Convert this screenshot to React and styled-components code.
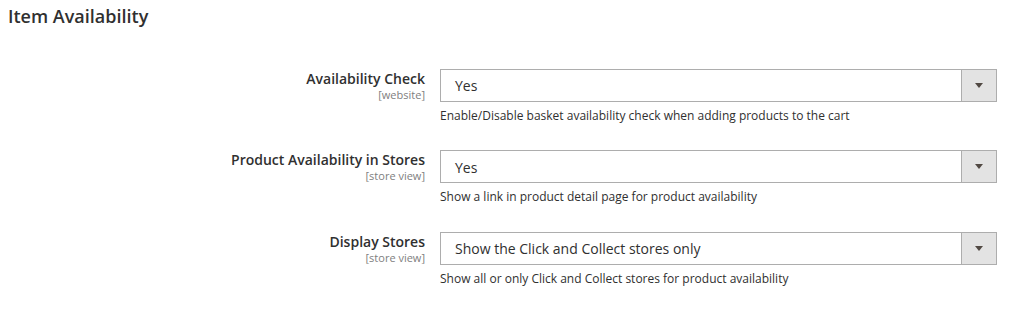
import React from "react";
import styled, { createGlobalStyle } from "styled-components";

const GlobalStyle = createGlobalStyle`
  body {
    margin: 0;
    background: #ffffff;
    font-family: "Open Sans", "Liberation Sans", sans-serif;
    color: #303030;
  }
`;

const fields = [
  {
    id: "availability-check",
    label: "Availability Check",
    scope: "[website]",
    value: "Yes",
    note: "Enable/Disable basket availability check when adding products to the cart",
  },
  {
    id: "availability-stores",
    label: "Product Availability in Stores",
    scope: "[store view]",
    value: "Yes",
    note: "Show a link in product detail page for product availability",
  },
  {
    id: "display-stores",
    label: "Display Stores",
    scope: "[store view]",
    value: "Show the Click and Collect stores only",
    note: "Show all or only Click and Collect stores for product availability",
  },
];

const App = () => {
  return (
    <Section>
      <GlobalStyle />
      <Title>Item Availability</Title>
      <Fields>
        {fields.map((field) => (
          <Row key={field.id}>
            <Label>
              <LabelText>{field.label}</LabelText>
              <Scope>{field.scope}</Scope>
            </Label>
            <Control>
              <Select>
                <Value>{field.value}</Value>
                <ArrowCell>
                  <Arrow />
                </ArrowCell>
              </Select>
              <Note>{field.note}</Note>
            </Control>
          </Row>
        ))}
      </Fields>
    </Section>
  );
};

export default App;

const Section = styled.section`
  width: 1028px;
  height: 311px;
  padding: 4px 31px 0 8px;
  box-sizing: border-box;
`;

const Title = styled.h2`
  margin: 0;
  font-size: 18px;
  font-weight: 600;
  line-height: normal;
  color: #303030;
`;

const Fields = styled.div`
  display: flex;
  flex-direction: column;
  gap: 25.5px;
  margin-top: 40.5px;
`;

const Row = styled.div`
  display: grid;
  grid-template-columns: 417px 557px;
  column-gap: 15px;
`;

const Label = styled.div`
  display: flex;
  flex-direction: column;
  align-items: flex-end;
  text-align: right;
`;

const LabelText = styled.span`
  font-size: 14px;
  font-weight: 600;
  line-height: 19px;
  color: #303030;
`;

const Scope = styled.span`
  font-size: 11px;
  line-height: 14px;
  color: #808080;
`;

const Control = styled.div`
  display: flex;
  flex-direction: column;
`;

const Select = styled.div`
  display: flex;
  height: 33px;
  box-sizing: border-box;
  border: 1px solid #adadad;
  background: #ffffff;
`;

const Value = styled.span`
  flex: 1;
  display: flex;
  align-items: center;
  padding: 1px 0 0 14px;
  font-size: 14px;
  color: #303030;
`;

const ArrowCell = styled.span`
  width: 34px;
  display: flex;
  align-items: center;
  justify-content: center;
  background: #e3e3e3;
  border-left: 1px solid #adadad;
`;

const Arrow = styled.span`
  width: 0;
  height: 0;
  border-left: 4px solid transparent;
  border-right: 4px solid transparent;
  border-top: 5px solid #514943;
`;

const Note = styled.div`
  margin-top: 5px;
  font-size: 12px;
  line-height: 18px;
  color: #303030;
`;
